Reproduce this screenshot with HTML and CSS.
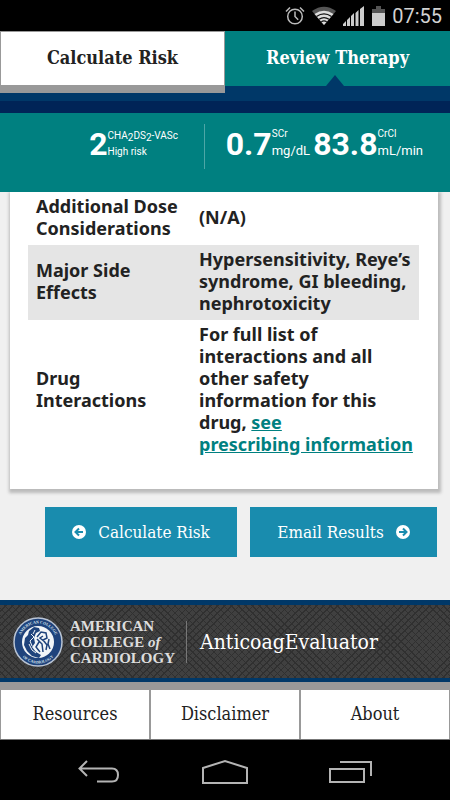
FILE: index.html
```html
<!DOCTYPE html>
<html lang="en">
<head>
<meta charset="utf-8">
<meta name="viewport" content="width=device-width, initial-scale=1">
<title>AnticoagEvaluator</title>
<link rel="stylesheet" href="styles.css">
</head>
<body>
<div class="status">
  <svg width="20" height="20" viewBox="0 0 20 20" fill="none" stroke="#bbb" stroke-width="1.5"><circle cx="10" cy="10.500" r="7.300"/><path d="M10 5.500v5l3.200 3.200M1 5.500l4-4M19 5.500l-4-4"/></svg>
  <svg width="24" height="20" viewBox="0 0 24 20"><path fill="#555" d="M0 5Q12-3.500 24 5L12 19z"/><path fill="#ddd" d="M2.500 8Q12 1.500 21.500 8L12 19z"/><path fill="none" stroke="#111" stroke-width="1.300" d="M4.500 10.500q7.500-5.200 15 0M7 13.300q5-3.500 10 0M9.300 15.800q2.700-2 5.400 0"/></svg>
  <svg width="22" height="20" viewBox="0 0 22 20" fill="#ccc"><path d="M0 20v-2l3-3v5zM4 20v-6l3-3v9zM8 20V10l3-3v13zM12.500 20V7l3-3v16zM17 20V3l4-3v20z"/></svg>
  <svg width="13" height="20" viewBox="0 0 13 20"><path fill="#555" d="M0 3h4V0h5v3h4v4H0z"/><path fill="#ccc" d="M0 7h13v13H0z"/></svg>
  <time>07:55</time>
</div>
<nav class="tabs">
  <a class="tab" href="#risk">Calculate Risk</a>
  <a class="tab active" href="#therapy" aria-current="page">Review Therapy</a>
</nav>
<div class="bands"></div>
<section class="scores">
  <div class="score-group first">
    <div class="score"><strong>2</strong><span class="labels even"><span>CHA<sub>2</sub>DS<sub>2</sub>-VASc</span><span>High risk</span></span></div>
  </div>
  <div class="score-group second">
    <div class="score"><strong>0.7</strong><span class="labels"><span>SCr</span><span class="unit">mg/dL</span></span></div>
    <div class="score"><strong>83.8</strong><span class="labels"><span>CrCl</span><span class="unit">mL/min</span></span></div>
  </div>
</section>
<main>
  <div class="card">
    <table>
      <tbody>
        <tr><th scope="row">Additional Dose Considerations</th><td>(N/A)</td></tr>
        <tr class="shade"><th scope="row">Major Side Effects</th><td>Hypersensitivity, Reye’s syndrome, GI bleeding, nephrotoxicity</td></tr>
        <tr><th scope="row">Drug<br>Interactions</th><td>For full list of<br>interactions and all<br>other safety<br>information for this<br>drug, <a href="#info">see<br>prescribing information</a></td></tr>
      </tbody>
    </table>
  </div>
  <div class="actions">
    <button type="button"><svg width="14" height="14" viewBox="0 0 14 14"><circle cx="7" cy="7" r="7" fill="#fff"/><path d="M11 7H4M7 3.500L3.500 7 7 10.500" fill="none" stroke="#198cae" stroke-width="2"/></svg>Calculate Risk</button>
    <button type="button">Email Results<svg width="14" height="14" viewBox="0 0 14 14"><circle cx="7" cy="7" r="7" fill="#fff"/><path d="M3 7h7M7 3.500L10.500 7 7 10.500" fill="none" stroke="#198cae" stroke-width="2"/></svg></button>
  </div>
</main>
<footer class="brand">
  <svg class="seal" width="50" height="50" viewBox="0 0 50 50">
    <defs><path id="arc-top" d="M6.500 25a18.500 18.500 0 0 1 37 0"/><path id="arc-low" d="M3.500 25a21.500 21.500 0 0 0 43 0"/></defs>
    <circle cx="25" cy="25" r="24" fill="#1f437c" stroke="#b9c4d4" stroke-width="1.500"/>
    <circle cx="25" cy="25" r="16" fill="#f2f5f8"/>
    <text class="seal-text"><textPath href="#arc-top" startOffset="50%" text-anchor="middle">AMERICAN COLLEGE</textPath></text>
    <text class="seal-text"><textPath href="#arc-low" startOffset="50%" text-anchor="middle">OF CARDIOLOGY</textPath></text>
    <path fill="#1f437c" d="M16 14l5-4 5 1 1 3-4 2-2 5 1 5-3 4 4 5 5 3-2 3-7-2-5-5-3-6 1-7 3-3z"/>
    <path fill="none" stroke="#1f437c" stroke-width="1.500" d="M24 20l4-5 5 1 1 5-4 2 4 5-1 5M24 22l5 5 1 8M26 25l-3 5 4 5M30 19l-3 2 5 4M36 22l-1 5 2 5"/>
    <path fill="none" stroke="#f2f5f8" d="M18 17l3 3-4 4 2 5M16 27l3 6 4 3M22 13l-2 4"/>
  </svg>
  <div class="college">AMERICAN<br>COLLEGE <i>of</i><br>CARDIOLOGY</div>
  <div class="product">AnticoagEvaluator</div>
</footer>
<nav class="links">
  <a href="#resources">Resources</a>
  <a href="#disclaimer">Disclaimer</a>
  <a href="#about">About</a>
</nav>
<div class="system">
  <button type="button" aria-label="Back"><svg width="42" height="24" viewBox="0 0 42 24"><path d="M9 1L1.500 8.500 9 16M2 8.500h32q6 0 6 6.500t-6 6.500H19"/></svg></button>
  <button type="button" aria-label="Home"><svg width="46" height="26" viewBox="0 0 46 26"><path d="M1 9L23 2l22 7v15H1z"/></svg></button>
  <button type="button" aria-label="Recent apps"><svg width="44" height="24" viewBox="0 0 44 24"><path d="M1 9h34v13H1zM11 2h31v14"/></svg></button>
</div>
</body>
</html>
```
FILE: styles.css
```css
* { box-sizing: border-box; }
:root {
  --slab: "Roboto Slab", "DejaVu Serif Condensed", "DejaVu Serif", serif;
  --teal: #008080;
}
body { margin: 0; background: #f0f0f0; font-family: Roboto, sans-serif; color: #222; }
a { color: inherit; text-decoration: none; }

.status { height: 31px; background: #000; display: flex; align-items: center; justify-content: flex-end; gap: 7px; padding: 0 8px; }
.status time { color: #d2d2d2; font-size: 20px; }

.tabs { display: grid; grid-template-columns: 1fr 1fr; height: 62px; background: #003868; }
.tab { height: 55px; display: flex; align-items: center; justify-content: center; padding-bottom: 2px; font: bold 18px/24px var(--slab); background: #fff; border: 1px solid #999; box-shadow: 0 7px #999; position: relative; }
.tab.active { background: var(--teal); border-color: var(--teal); color: #fff; box-shadow: none; }
.tab.active::after { content: ""; position: absolute; bottom: -1px; left: 50%; margin-left: -12px; border: 9px solid transparent; border-top: 0; border-bottom: 11px solid #003868; }

.bands { height: 20px; background: #002457; border-top: 8px solid #003868; }

.scores { display: flex; height: 79px; background: var(--teal); color: #fff; padding-top: 11px; }
.score-group { display: flex; height: 45px; align-items: flex-start; padding-top: 2px; gap: 3px; }
.score-group.first { width: 204px; justify-content: flex-end; padding-right: 26px; }
.score-group.second { flex: 1; border-left: 1px solid #4da6a6; justify-content: flex-end; padding-right: 27px; }
.score { display: flex; align-items: flex-start; }
.score strong { font-size: 32px; line-height: 36px; }
.labels { display: flex; flex-direction: column; font-size: 10px; line-height: 16px; white-space: nowrap; }
.labels.even { padding-top: 2px; }
.labels sub { font-size: 10px; line-height: 0; vertical-align: -2px; }
.unit { font-size: 13px; line-height: 18px; }

.card { margin: 0 12px 0 10px; height: 297px; background: #fff; box-shadow: 1px 2px 3px 2px #bbb; clip-path: inset(0 -8px -8px -8px); padding: 0 19px 0 18px; }
table { width: 100%; border-collapse: collapse; table-layout: fixed; font: bold 18px/22px "Noto Sans", sans-serif; }
th, td { text-align: left; padding: 3px 0 6px 8px; }
th { width: 163px; }
.shade { background: #e5e5e5; }
td a { color: var(--teal); text-decoration: underline; }

.actions { display: flex; gap: 13px; padding: 18px 13px 43px 45px; }
.actions button { flex: 1 1 auto; height: 50px; border: 0; background: #198cae; color: #fff; font: 17px/24px var(--slab); display: flex; align-items: center; justify-content: center; gap: 12px; padding: 0; }

.brand { height: 82px; display: flex; align-items: center; padding: 0 13px; border-top: 5px solid #003868; border-bottom: 4px solid #003868; background: repeating-linear-gradient(45deg, transparent 0 4px, #303030 4px 5px), repeating-linear-gradient(135deg, transparent 0 4px, #303030 4px 5px), #404040; color: #ddd; }
.seal-text { font: bold 4px "Liberation Serif", serif; fill: #dbe3ee; }
.college { margin-left: 7px; font: bold 15px/16px "Liberation Serif", serif; white-space: nowrap; }
.product { margin-left: 11px; border-left: 1px solid #777; padding-left: 13px; font: 21px/42px var(--slab); color: #fff; }

.links { display: grid; grid-template-columns: 1fr 1fr 1fr; padding-top: 7px; background: #999; border-bottom: 1px solid #777; }
.links a { height: 50px; border: 1px solid #999; border-bottom: 0; background: #fff; font: 18px/47px var(--slab); text-align: center; }

.system { display: flex; height: 60px; background: #000; align-items: center; justify-content: space-between; padding: 4px 77px 0 78px; }
.system button { background: none; border: 0; padding: 0; display: flex; }
.system path { fill: none; stroke: #b4b4b4; stroke-width: 2; }
```
